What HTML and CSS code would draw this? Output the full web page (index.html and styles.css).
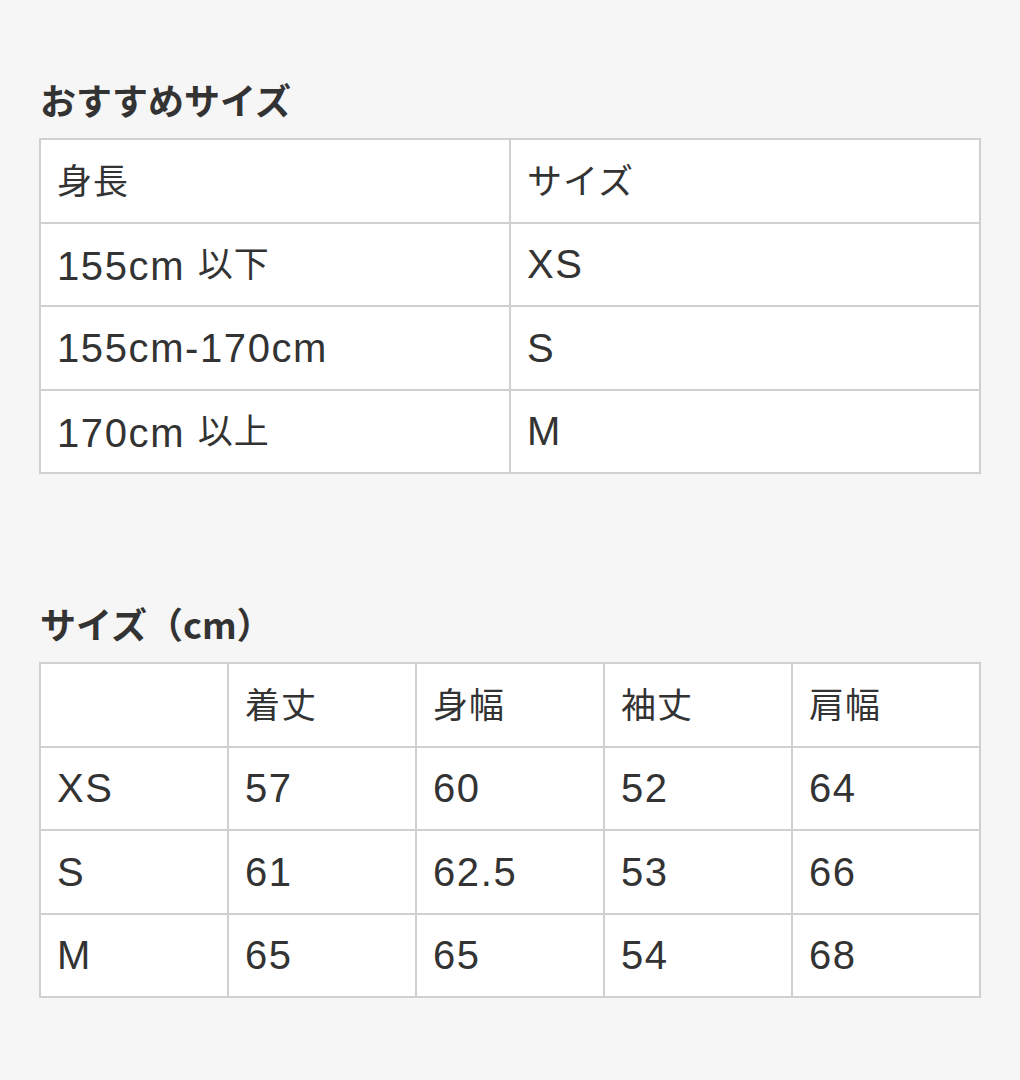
FILE: index.html
```html
<!DOCTYPE html>
<html lang="ja">
<head>
<meta charset="utf-8">
<link rel="stylesheet" href="styles.css">
</head>
<body>
<main class="page">
  <section class="block">
    <h2 class="title">おすすめサイズ</h2>
    <table class="size-table two">
      <tr><td><span class="ja">身長</span></td><td><span class="ja">サイズ</span></td></tr>
      <tr><td>155cm <span class="ja">以下</span></td><td>XS</td></tr>
      <tr><td>155cm-170cm</td><td>S</td></tr>
      <tr><td>170cm <span class="ja">以上</span></td><td>M</td></tr>
    </table>
  </section>
  <section class="block second">
    <h2 class="title">サイズ（cm）</h2>
    <table class="size-table five">
      <tr><td></td><td><span class="ja">着丈</span></td><td><span class="ja">身幅</span></td><td><span class="ja">袖丈</span></td><td><span class="ja">肩幅</span></td></tr>
      <tr><td>XS</td><td>57</td><td>60</td><td>52</td><td>64</td></tr>
      <tr><td>S</td><td>61</td><td>62.5</td><td>53</td><td>66</td></tr>
      <tr><td>M</td><td>65</td><td>65</td><td>54</td><td>68</td></tr>
    </table>
  </section>
</main>
</body>
</html>
```
FILE: styles.css
```css
html, body {
  margin: 0;
  padding: 0;
  background: #f6f6f6;
}
body {
  font-family: "Noto Sans CJK JP", "Noto Sans", sans-serif;
  color: #333;
}
.page {
  padding: 79px 39px 0 39px;
}
.block.second {
  margin-top: 129px;
}
.title {
  margin: 0 0 19px 1px;
  font-size: 36px;
  line-height: 40px;
  font-weight: 700;
  color: #333;
}
.size-table {
  width: 942px;
  border-collapse: collapse;
  background: #fff;
  table-layout: fixed;
}
.size-table td {
  border: 2px solid #d0d0d0;
  height: 81.5px;
  padding: 0 0 0 16px;
  font-family: "Liberation Sans", "Noto Sans CJK JP", sans-serif;
  font-size: 40px;
  line-height: 48px;
  letter-spacing: 1.6px;
  vertical-align: middle;
  color: #333;
}
.size-table .ja {
  font-family: "Noto Sans CJK JP", sans-serif;
  font-size: 35px;
  letter-spacing: 1px;
  margin-left: -8px;
  vertical-align: 3px;
}
.size-table td > .ja:first-child {
  margin-left: 0;
}
.two td { width: 50%; }
.five td { width: 20%; }
```
